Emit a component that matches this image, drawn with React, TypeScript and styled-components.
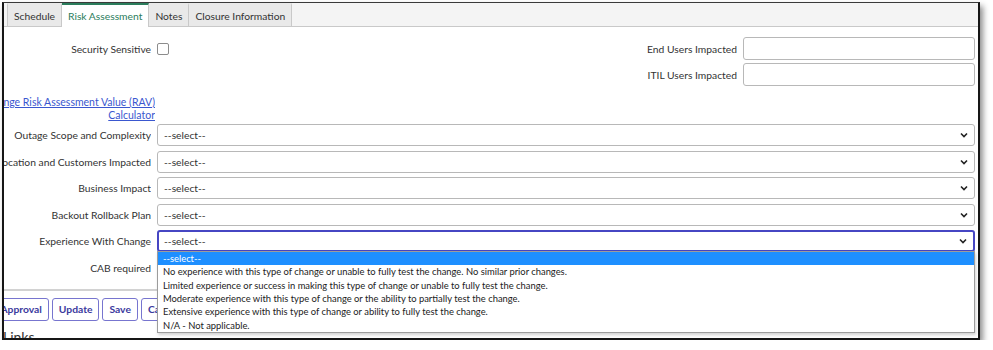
import React from 'react';
import styled, { createGlobalStyle } from 'styled-components';

/** ——— data ——— */
const tabs = ['Schedule', 'Risk Assessment', 'Notes', 'Closure Information'];
const selectRows = [
  'Outage Scope and Complexity',
  'Location and Customers Impacted',
  'Business Impact',
  'Backout Rollback Plan',
  'Experience With Change',
];
const experienceOptions = [
  '--select--',
  'No experience with this type of change or unable to fully test the change. No similar prior changes.',
  'Limited experience or success in making this type of change or unable to fully test the change.',
  'Moderate experience with this type of change or the ability to partially test the change.',
  'Extensive experience with this type of change or ability to fully test the change.',
  'N/A - Not applicable.',
];
const buttons = ['Request Approval', 'Update', 'Save', 'Cancel', 'Delete'];

const Global = createGlobalStyle`
  html, body { margin: 0; padding: 0; background: #fff; }
  body { font-family: Lato, "Open Sans", Arial, sans-serif; color: #333; }
`;

/** ——— frame (screenshot border) ——— */
const Frame = styled.div`
  margin: 2px 0 0 2px;
  width: 978px;
  height: 338px;
  box-sizing: border-box;
  border: 2px solid #161616;
  border-top: 1px solid #3a3a3a;
  box-shadow: 3px 4px 6px rgba(0, 0, 0, 0.45);
  overflow: hidden;
  position: relative;
  background: #fff;
`;

/** ——— tabs ——— */
const TabStrip = styled.div`
  display: flex;
  height: 24px;
  padding-left: 3px;
  background: #f4f4f4;
  border-bottom: 1px solid #c9c9c9;
  box-sizing: border-box;
`;

const Tab = styled.div<{ $active?: boolean }>`
  display: flex;
  align-items: center;
  padding: 0 6px;
  font-size: 10.3px;
  background: ${({ $active }) => ($active ? '#fff' : '#e9e9e9')};
  color: ${({ $active }) => ($active ? '#2b7d5c' : '#333')};
  border-right: 1px solid #c9c9c9;
  border-top: 2px solid ${({ $active }) => ($active ? '#2b7d5c' : 'transparent')};
  margin-bottom: ${({ $active }) => ($active ? '-1px' : '0')};
  &:first-child { border-left: 1px solid #c9c9c9; }
`;

/** ——— form ——— */
const Form = styled.div`
  padding: 10px 3px 0 0;
`;

const TopGrid = styled.div`
  display: grid;
  grid-template-columns: 147px 1fr 247px 232px;
  grid-auto-rows: 23px;
  column-gap: 6px;
  row-gap: 3px;
`;

const Label = styled.div`
  display: flex;
  align-items: center;
  justify-content: flex-end;
  overflow: hidden;
  white-space: nowrap;
  font-size: 10.3px;
  color: #333;
`;

const Checkbox = styled.div`
  align-self: center;
  width: 12px;
  height: 12px;
  box-sizing: border-box;
  border: 1px solid #8c8c8c;
  border-radius: 2px;
  background: #fff;
`;

const TextInput = styled.div`
  box-sizing: border-box;
  border: 1px solid #b8b8b8;
  border-radius: 3px;
  background: #fff;
`;

const LinkRow = styled.div`
  display: flex;
  justify-content: flex-end;
  width: 151px;
  overflow: hidden;
  margin-top: 10px;
  height: 26px;
`;

const CalcLink = styled.a`
  display: block;
  text-align: right;
  white-space: nowrap;
  font-size: 10.5px;
  line-height: 13px;
  color: #3a57cf;
  text-decoration: underline;
`;

const SelectGrid = styled.div`
  display: grid;
  grid-template-columns: 147px 1fr;
  grid-auto-rows: 22px;
  column-gap: 6px;
  row-gap: 4.5px;
  margin-top: 2px;
`;

const SelectBox = styled.div<{ $focused?: boolean }>`
  position: relative;
  display: flex;
  align-items: center;
  justify-content: space-between;
  box-sizing: border-box;
  padding: 0 6px 0 ${({ $focused }) => ($focused ? '5px' : '6px')};
  border: ${({ $focused }) => ($focused ? '2px solid #4646c3' : '1px solid #b8b8b8')};
  border-radius: 3px;
  background: #fff;
  font-size: 10.3px;
  color: #333;
`;

const Dropdown = styled.div`
  position: absolute;
  top: calc(100% + 1px);
  left: -2px;
  right: -2px;
  z-index: 5;
  background: #fff;
  border: 1px solid #9c9c9c;
  box-shadow: 1px 2px 3px rgba(0, 0, 0, 0.18);
`;

const Option = styled.div<{ $selected?: boolean }>`
  height: 13.33px;
  line-height: 13.33px;
  padding-left: 5px;
  font-size: 9.4px;
  white-space: nowrap;
  background: ${({ $selected }) => ($selected ? '#1e8fff' : 'transparent')};
  color: ${({ $selected }) => ($selected ? '#fff' : '#222')};
`;

const Separator = styled.div`
  margin: 10px 0 0 0;
  height: 2px;
  background: #d2d2d2;
`;

const ButtonBar = styled.div`
  display: flex;
  gap: 3px;
  margin: 7px 0 0 -50px;
`;

const Button = styled.button`
  height: 23px;
  padding: 0 6px;
  border: 1px solid #7775cf;
  border-radius: 3px;
  background: #fff;
  color: #3b3a9e;
  font-family: Lato, "Open Sans", Arial, sans-serif;
  font-size: 10.3px;
  font-weight: 700;
  white-space: nowrap;
`;

const SectionTitle = styled.div`
  margin: 7px 0 0 -1px;
  font-size: 14px;
  color: #333;
`;

const Chevron: React.FC = () => (
  <svg width="8" height="6" viewBox="0 0 8 6" aria-hidden>
    <path d="M1 1.5 L4 4.5 L7 1.5" fill="none" stroke="#222" strokeWidth="1.6" />
  </svg>
);

export default function App() {
  return (
    <>
      <Global />
      <Frame>
        <TabStrip>
          {tabs.map((t) => (
            <Tab key={t} $active={t === 'Risk Assessment'}>{t}</Tab>
          ))}
        </TabStrip>

        <Form>
          <TopGrid>
            <Label>Security Sensitive</Label>
            <Checkbox />
            <Label>End Users Impacted</Label>
            <TextInput />
            <span />
            <span />
            <Label>ITIL Users Impacted</Label>
            <TextInput />
          </TopGrid>

          <LinkRow>
            <CalcLink href="#">
              Change Risk Assessment Value (RAV)
              <br />
              Calculator
            </CalcLink>
          </LinkRow>

          <SelectGrid>
            {selectRows.map((label) => {
              const focused = label === 'Experience With Change';
              return (
                <React.Fragment key={label}>
                  <Label>{label}</Label>
                  <SelectBox $focused={focused}>
                    <span>--select--</span>
                    <Chevron />
                    {focused && (
                      <Dropdown>
                        {experienceOptions.map((o, i) => (
                          <Option key={o} $selected={i === 0}>{o}</Option>
                        ))}
                      </Dropdown>
                    )}
                  </SelectBox>
                </React.Fragment>
              );
            })}
            <Label>CAB required</Label>
            <Checkbox />
          </SelectGrid>

          <Separator />

          <ButtonBar>
            {buttons.map((b) => (
              <Button key={b}>{b}</Button>
            ))}
          </ButtonBar>

          <SectionTitle>Links</SectionTitle>
        </Form>
      </Frame>
    </>
  );
}
